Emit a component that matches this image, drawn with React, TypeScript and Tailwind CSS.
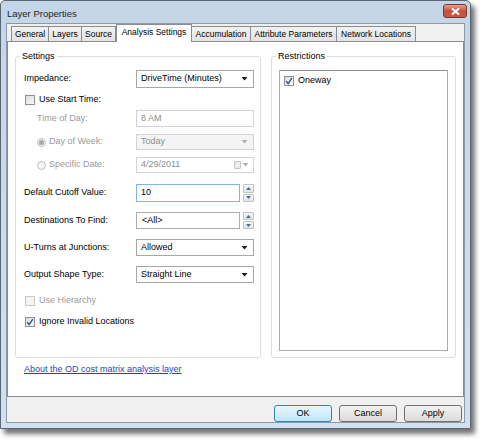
import React from 'react';

const font = { fontFamily: '"Liberation Sans", Arial, sans-serif' };

function Arrow({ gray }: { gray?: boolean }) {
  return (
    <svg width="7" height="4" viewBox="0 0 7 4">
      <path d="M0.5 0 L6.5 0 L3.5 3.5 Z" fill={gray ? '#b0b0b0' : '#1a1a1a'} />
    </svg>
  );
}

function Combo({ value, disabled }: { value: string; disabled?: boolean }) {
  return (
    <div
      className={`w-[118px] h-full flex items-center justify-between pl-[4px] pr-[5px] border ${
        disabled ? 'border-[#d3d3d3] bg-[#f4f4f4] text-[#8d8d8d]' : 'border-[#a7a7a7] bg-white text-black'
      }`}
    >
      <span>{value}</span>
      <Arrow gray={disabled} />
    </div>
  );
}

function Spin() {
  return (
    <div className="flex flex-col gap-[1px] h-full w-[11px]">
      {[0, 1].map((i) => (
        <div
          key={i}
          className="flex-1 flex items-center justify-center border border-[#c3c3c3] bg-gradient-to-b from-[#f7f7f7] to-[#e3e3e3] rounded-[1px]"
        >
          <svg width="5" height="3" viewBox="0 0 5 3">
            <path d={i === 0 ? 'M0 3 L5 3 L2.5 0 Z' : 'M0 0 L5 0 L2.5 3 Z'} fill="#4a6a9a" />
          </svg>
        </div>
      ))}
    </div>
  );
}

function Check({ checked, disabled }: { checked?: boolean; disabled?: boolean }) {
  return (
    <div
      className={`w-[10px] h-[10px] flex items-center justify-center border ${
        disabled ? 'border-[#c8c8c8] bg-[#f4f4f4]' : 'border-[#8e8f8f] bg-gradient-to-br from-[#dcdcdc] to-[#fbfbfb]'
      }`}
    >
      {checked && (
        <svg width="8" height="8" viewBox="0 0 8 8">
          <path d="M1.2 4.2 L3.2 6.6 L6.8 1.2" stroke="#2c4fa3" strokeWidth="1.4" fill="none" />
        </svg>
      )}
    </div>
  );
}

function Radio({ checked }: { checked?: boolean }) {
  return (
    <div className="w-[9px] h-[9px] rounded-full border border-[#c0c0c0] bg-[#f2f2f2] flex items-center justify-center">
      {checked && <div className="w-[5px] h-[5px] rounded-full bg-[#a8a8a8]" />}
    </div>
  );
}

function Row({ label, gray, indent, children, h, mt }: { label: React.ReactNode; gray?: boolean; indent?: boolean; children?: React.ReactNode; h: string; mt: string }) {
  return (
    <div className={`flex items-center ${h} ${mt}`}>
      <div className={`w-[112px] flex items-center ${indent ? 'pl-[13px]' : ''} ${gray ? 'text-[#9a9a9a]' : 'text-black'}`}>
        {label}
      </div>
      <div className="h-full flex">{children}</div>
    </div>
  );
}

const tabs = [
  { name: 'General', w: 'w-[38px]' },
  { name: 'Layers', w: 'w-[34px]' },
  { name: 'Source', w: 'w-[35px]' },
  { name: 'Analysis Settings', w: 'w-[76px]', active: true },
  { name: 'Accumulation', w: 'w-[60px]' },
  { name: 'Attribute Parameters', w: 'w-[87px]' },
  { name: 'Network Locations', w: 'w-[80px]' },
];

function Button({ label, primary }: { label: string; primary?: boolean }) {
  return (
    <div
      className={`w-[58px] h-[17px] flex items-center justify-center rounded-[3px] border ${
        primary
          ? 'border-[#3c7fb1] bg-gradient-to-b from-[#eaf6fd] to-[#bee6fd]'
          : 'border-[#707070] bg-gradient-to-b from-[#f2f2f2] to-[#dcdcdc]'
      }`}
    >
      {label}
    </div>
  );
}

export default function App() {
  return (
    <div className="w-[482px] h-[441px] bg-white text-[9px] text-black" style={font}>
      <div className="w-[471px] h-[429px] flex flex-col bg-gradient-to-b from-[#c5d5e8] to-[#d3e0ef] border border-[#5a6673] rounded-t-[5px] shadow-[4px_5px_5px_rgba(0,0,0,0.55)]">
        {/* title bar */}
        <div className="h-[25px] flex items-start justify-between pl-[6px] pr-[3px] pt-[3px]">
          <span className="text-[9.5px] text-[#1e1e1e] mt-[3px]">Layer Properties</span>
          <div className="w-[24px] h-[14px] rounded-[3px] border border-[#7a3a33] bg-gradient-to-b from-[#e6a08f] via-[#c7503d] to-[#c45a47] flex items-center justify-center">
            <svg width="9" height="7" viewBox="0 0 9 7">
              <path d="M1 0.5 L8 6.5 M8 0.5 L1 6.5" stroke="white" strokeWidth="2" />
            </svg>
          </div>
        </div>
        {/* body */}
        <div className="flex-1 mx-[5px] mb-[5px] bg-[#f0f0f0] border border-[#8a9aad] flex flex-col">
          {/* tabs */}
          <div className="flex items-end h-[17px] pl-[4px] text-[8.5px]">
            {tabs.map((t) => (
              <div
                key={t.name}
                className={`${t.w} flex items-center justify-center border border-b-0 ${
                  t.active
                    ? 'h-[18px] bg-white border-[#898c95] relative z-10 -mb-[1px] pb-[2px]'
                    : 'h-[15px] bg-gradient-to-b from-[#f2f2f2] to-[#e3e3e3] border-[#898c95] -ml-[1px] first:ml-0'
                }`}
              >
                {t.name}
              </div>
            ))}
          </div>
          {/* panel */}
          <div className="w-[457px] h-[356px] bg-white border border-[#898c95] flex flex-col">
            <div className="flex gap-[10px] pl-[7px] pt-[14px]">
              {/* settings group */}
              <div className="w-[246px] h-[302px] border border-[#d5dfe5] rounded-[3px] relative">
                <span className="absolute -top-[7px] left-[4px] bg-white px-[2px]">Settings</span>
                <div className="flex flex-col pl-[8px]">
                  <Row label="Impedance:" h="h-[18px]" mt="mt-[13px]">
                    <Combo value="DriveTime (Minutes)" />
                  </Row>
                  <div className="flex items-center gap-[4px] h-[18px] mt-[3px] pl-[1px]">
                    <Check />
                    <span>Use Start Time:</span>
                  </div>
                  <Row label="Time of Day:" gray indent h="h-[17px]" mt="mt-[1px]">
                    <div className="w-[118px] h-full border border-[#d3d3d3] bg-white text-[#8d8d8d] flex items-center pl-[4px]">8 AM</div>
                  </Row>
                  <Row
                    label={
                      <span className="flex items-center gap-[3px]">
                        <Radio checked />
                        Day of Week:
                      </span>
                    }
                    gray
                    indent
                    h="h-[16px]"
                    mt="mt-[7px]"
                  >
                    <Combo value="Today" disabled />
                  </Row>
                  <Row
                    label={
                      <span className="flex items-center gap-[3px]">
                        <Radio />
                        Specific Date:
                      </span>
                    }
                    gray
                    indent
                    h="h-[16px]"
                    mt="mt-[7px]"
                  >
                    <div className="w-[118px] h-full border border-[#d3d3d3] bg-white text-[#8d8d8d] flex items-center justify-between pl-[4px] pr-[4px]">
                      <span>4/29/2011</span>
                      <span className="flex items-center gap-[1px]">
                        <span className="w-[7px] h-[8px] border border-[#c4c4c4] bg-[#ececec] rounded-[1px]" />
                        <Arrow gray />
                      </span>
                    </div>
                  </Row>
                  <Row label="Default Cutoff Value:" h="h-[18px]" mt="mt-[11px]">
                    <div className="w-[104px] h-full border border-[#7eb4ea] bg-white flex items-center pl-[4px]">10</div>
                    <div className="ml-[3px] h-full">
                      <Spin />
                    </div>
                  </Row>
                  <Row label="Destinations To Find:" h="h-[17px]" mt="mt-[10px]">
                    <div className="w-[104px] h-full border border-[#abadb3] bg-white flex items-center pl-[5px]">&lt;All&gt;</div>
                    <div className="ml-[3px] h-full">
                      <Spin />
                    </div>
                  </Row>
                  <Row label="U-Turns at Junctions:" h="h-[17px]" mt="mt-[10px]">
                    <Combo value="Allowed" />
                  </Row>
                  <Row label="Output Shape Type:" h="h-[17px]" mt="mt-[10px]">
                    <Combo value="Straight Line" />
                  </Row>
                  <div className="flex items-center gap-[4px] h-[18px] mt-[9px] pl-[1px] text-[#9a9a9a]">
                    <Check disabled />
                    <span>Use Hierarchy</span>
                  </div>
                  <div className="flex items-center gap-[4px] h-[18px] mt-[3px] pl-[1px]">
                    <Check checked />
                    <span>Ignore Invalid Locations</span>
                  </div>
                </div>
              </div>
              {/* restrictions group */}
              <div className="w-[185px] h-[302px] border border-[#d5dfe5] rounded-[3px] relative px-[7px] pt-[13px]">
                <span className="absolute -top-[7px] left-[4px] bg-white px-[2px]">Restrictions</span>
                <div className="h-[281px] border border-[#a9abb0] border-t-[#8e9096] bg-white pt-[3px] pl-[4px]">
                  <div className="flex items-center gap-[4px]">
                    <Check checked />
                    <span>Oneway</span>
                  </div>
                </div>
              </div>
            </div>
            <div className="pl-[16px] mt-[5px]">
              <span className="text-[#1a44d4] underline">About the OD cost matrix analysis layer</span>
            </div>
          </div>
          {/* buttons */}
          <div className="flex justify-end gap-[7px] pr-[2px] mt-[8px]">
            <Button label="OK" primary />
            <Button label="Cancel" />
            <Button label="Apply" />
          </div>
        </div>
      </div>
    </div>
  );
}
